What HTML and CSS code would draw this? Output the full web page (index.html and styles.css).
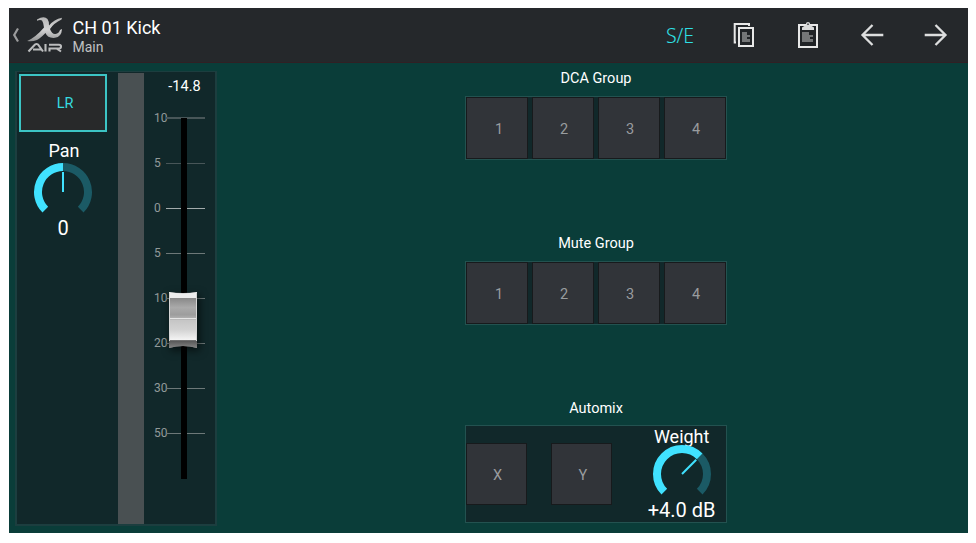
FILE: index.html
```html
<!DOCTYPE html>
<html lang="en">
<head>
<meta charset="utf-8">
<title>X AIR</title>
<link rel="stylesheet" href="styles.css">
</head>
<body>
<div class="app">
  <header class="bar">
    <svg class="brand" width="58" height="54" viewBox="0 0 58 54">
      <defs>
        <linearGradient id="silver" x1="0" y1="0" x2="0" y2="1">
          <stop offset="0" stop-color="#b4b4b4"/><stop offset=".5" stop-color="#d4d4d4"/><stop offset="1" stop-color="#929394"/>
        </linearGradient>
      </defs>
      <path d="M9 20.500 5.200 27l3.800 6.500" fill="none" stroke="#9b9c9d" stroke-width="2.200"/>
      <path d="M28 11.500Q35 7.500 38.500 11Q40.500 14 40 17.500Q45 11.500 53 9.800L52.500 11.500Q45 15 41 21Q43 26.500 46.500 26Q50 25.500 51 22L53 21Q52.500 29 46 29.800Q38.500 30.500 36.500 25Q31 30.500 28 32Q23 34 18.200 33Q27 29 35 19.500Q34.500 14.500 33 12.500Q31 11.500 28 12.800Z" fill="url(#silver)"/>
      <path d="M19.500 43.500 26 36.500Q27.500 35.500 29 36.500L34 43.500M24 41.500H32M36.500 36V43.500M40.500 43.500V40.500H50Q52 40.500 52 38.500Q52 36.800 50 36.800H40M47.500 40.500 52 43.500" fill="none" stroke="#bcbdbe" stroke-width="2.100"/>
    </svg>
    <div class="titles">
      <h1>CH 01 Kick</h1>
      <p>Main</p>
    </div>
    <nav class="actions">
      <span class="se">S/E</span>
      <svg width="64" height="54" viewBox="0 0 64 54" fill="none">
        <path d="M24 34.500H22.700V16H37V18" stroke="#e8e8e8" stroke-width="2"/>
        <path d="M27 20H41V38H27Z" fill="#202326" stroke="#e8e8e8" stroke-width="2"/>
        <path d="M30 24H35V27H38V29H35V31H38V34H30Z" fill="#747677"/>
      </svg>
      <svg width="64" height="54" viewBox="0 0 64 54" fill="none">
        <path d="M23 17H41V39H23Z" fill="#202326" stroke="#e8e8e8" stroke-width="2"/>
        <path d="M26 22V19.500L30 17V15.500Q30 14 32 14Q34 14 34 15.500V17L38 19.500V22Z" fill="#d9dada"/>
        <path d="M31.300 15.500H32.700V17H31.300Z" fill="#25282b"/>
        <path d="M26 24H33V27H37V29H34V31H37V34H26Z" fill="#747677"/>
      </svg>
      <svg width="64" height="54" viewBox="0 0 64 54" fill="none" stroke="#dddede" stroke-width="2.300">
        <path d="M43.300 27H22.500M32.500 17 22.500 27l10 10"/>
      </svg>
      <svg width="64" height="54" viewBox="0 0 64 54" fill="none" stroke="#dddede" stroke-width="2.300">
        <path d="M20.700 27H41.500M31.500 17l10 10-10 10"/>
      </svg>
    </nav>
  </header>

  <main class="content">
    <section class="strip">
      <div class="pan">
        <button class="lr">LR</button>
        <div class="knob-title">Pan</div>
        <svg class="knob" width="60" height="52" viewBox="-30 -30 60 52" fill="none">
          <path d="M0-25A25 25 0 0 1 17.680 17.680" stroke="#1b5a65" stroke-width="8"/>
          <path d="M-17.680 17.680A25 25 0 0 1 0-25" stroke="#40e2ff" stroke-width="8"/>
          <path d="M0-20V0" stroke="#40e2ff" stroke-width="2"/>
        </svg>
        <div class="knob-value">0</div>
      </div>
      <div class="meter"></div>
      <div class="fader">
        <div class="level">-14.8</div>
        <div class="scale">
          <div class="tick first"><span>10</span><i></i></div>
          <div class="tick"><span>5</span><i></i></div>
          <div class="tick unity"><span>0</span><i></i></div>
          <div class="tick"><span>5</span><i></i></div>
          <div class="tick"><span>10</span><i></i></div>
          <div class="tick"><span>20</span><i></i></div>
          <div class="tick"><span>30</span><i></i></div>
          <div class="tick"><span>50</span><i></i></div>
          <div class="track"></div>
          <svg class="cap" width="30" height="58" viewBox="0 0 30 58">
            <defs>
              <linearGradient id="upper" x1="0" y1="0" x2="0" y2="1">
                <stop offset="0" stop-color="#888"/><stop offset=".45" stop-color="#aaa"/><stop offset=".8" stop-color="#9d9d9d"/><stop offset="1" stop-color="#b5b5b5"/>
              </linearGradient>
              <linearGradient id="lower" x1="0" y1="0" x2="0" y2="1">
                <stop offset="0" stop-color="#c4c4c4"/><stop offset=".5" stop-color="#d2d2d2"/><stop offset="1" stop-color="#f4f4f4"/>
              </linearGradient>
              <linearGradient id="foot" x1="0" y1="0" x2="0" y2="1">
                <stop offset="0" stop-color="#555"/><stop offset="1" stop-color="#858585"/>
              </linearGradient>
            </defs>
            <path d="M1 1Q15 3 29 1V57Q15 53 1 57Z" fill="#8c8c8c"/>
            <path d="M1 1Q15 3.500 29 1V7H1Z" fill="#ededed"/>
            <path d="M2 7H28V28H2Z" fill="url(#upper)"/>
            <path d="M2 28H28V49H2Z" fill="url(#lower)"/>
            <path d="M2 27.500H28" stroke="#e4e4e4"/>
            <path d="M2 28.500H28" stroke="#b0b0b0" stroke-width=".6"/>
            <path d="M1 49.500H29V57Q15 53 1 57Z" fill="url(#foot)"/>
            <path d="M1.500 2V50M28.500 2V50" stroke="#d5d5d5"/>
          </svg>
        </div>
      </div>
    </section>

    <section class="groups">
      <h2 class="dca">DCA Group</h2>
      <div class="set"><button>1</button><button>2</button><button>3</button><button>4</button></div>
      <h2 class="mute">Mute Group</h2>
      <div class="set"><button>1</button><button>2</button><button>3</button><button>4</button></div>
      <h2 class="auto">Automix</h2>
      <div class="automix">
        <button>X</button><button>Y</button>
        <div class="weight">
          <div class="knob-title">Weight</div>
          <svg class="knob" width="60" height="52" viewBox="-30 -30 60 52" fill="none">
            <path d="M17.680-17.680A25 25 0 0 1 17.680 17.680" stroke="#1b5a65" stroke-width="8"/>
            <path d="M-17.680 17.680A25 25 0 1 1 17.680-17.680" stroke="#40e2ff" stroke-width="8"/>
            <path d="M14.200-14.200 0 0" stroke="#40e2ff" stroke-width="2"/>
          </svg>
          <div class="knob-value">+4.0 dB</div>
        </div>
      </div>
    </section>
  </main>
</div>
</body>
</html>
```
FILE: styles.css
```css
* { box-sizing: border-box; }
body {
  margin: 0;
  padding: 8px 8px 10px 9px;
  background: #fff;
  font-family: Roboto, "Liberation Sans", sans-serif;
  color: #fff;
}
h1, h2, p { margin: 0; font-weight: 400; }
button { margin: 0; padding: 0; font: inherit; }
svg { display: block; flex: none; }
.app { width: 959px; height: 525px; background: #0a3d39; }

.bar {
  display: flex;
  height: 55px;
  background: #25282b;
  border-bottom: 1px solid #312024;
}
.titles { padding: 9px 0 0 5.500px; }
.titles h1 { font-size: 18px; line-height: 22px; }
.titles p { font-size: 14px; line-height: 16px; color: #c0c1c2; }
.actions { display: flex; margin-left: auto; }
.se {
  width: 64px;
  line-height: 56px;
  font-family: "Noto Sans", sans-serif;
  font-size: 19.5px;
  font-weight: 300;
  text-align: center;
  color: #2fe0e6;
}

.content { display: flex; height: 470px; padding: 8px 0 0 6px; }
.strip {
  display: flex;
  width: 202px;
  height: 455px;
  padding-top: 1px;
  border: 2px solid #1c3e3f;
  border-top-width: 1px;
  background: #11282a;
}
.pan { display: flex; flex-direction: column; align-items: center; width: 101px; padding: 1px 10px 0 0; }
.lr {
  width: 88px;
  height: 58px;
  margin-left: 1px;
  padding-left: 4px;
  border: 2px solid #3cc4c4;
  background: #28292a;
  color: #36dce0;
  font-size: 14.500px;
}
.knob-title { font-size: 18px; line-height: 22px; }
.knob-value { font-size: 20px; line-height: 24px; }
.pan .knob-title { margin: 8px 0 0 3px; }
.pan .knob-value { margin: 2px 0 0 1px; }
.meter { width: 26px; height: 451px; background: #495052; }
.fader { flex: 1; }
.level { height: 23px; padding: 1px 0 0 10px; font-size: 14.500px; line-height: 25px; text-align: center; }
.scale { position: relative; padding-left: 10px; }
.tick { display: flex; align-items: center; height: 45px; }
.tick span { width: 12px; margin-top: -2px; font-size: 12px; line-height: 14px; color: #929a9a; }
.tick i { width: 39px; height: 1px; background: #6d7878; }
.tick:nth-child(-n+2) i { background: #485658; }
.tick.first i { height: 2px; margin-top: -1px; }
.tick.unity i { background: #a3abab; }
.track { position: absolute; left: 37px; top: 22px; width: 6px; height: 361px; background: #000; }
.cap { position: absolute; left: 24px; top: 195px; filter: drop-shadow(2px 3px 4px #000a); }

.groups { width: 262px; margin-left: 248px; }
.groups h2 { height: 20px; font-size: 14.500px; line-height: 20px; text-align: center; }
.dca { margin-top: -2px; }
.groups .mute { margin-top: 74px; }
.groups .auto { margin-top: 74px; }
.set { display: flex; gap: 4px; height: 64px; margin-top: 7px; border: 1px solid #235250; background: #11282a; }
.set button, .automix button {
  width: 62px;
  height: 62px;
  padding: 2px 0 0 2px;
  border: 1px solid #171a1c;
  background: #313439;
  color: #999c9f;
  font-size: 14.500px;
}
.set button:first-child { padding-left: 4px; }
.automix { display: flex; height: 98px; margin-top: 6px; border: 1px solid #235250; background: #11282a; }
.automix button { margin-top: 17px; }
.automix button + button { margin-left: 24px; }
.weight { display: flex; flex-direction: column; align-items: center; width: 90px; margin-left: 25px; }
.weight .knob-title { height: 18px; line-height: 22px; }
.weight .knob-value { line-height: 28px; }
```
